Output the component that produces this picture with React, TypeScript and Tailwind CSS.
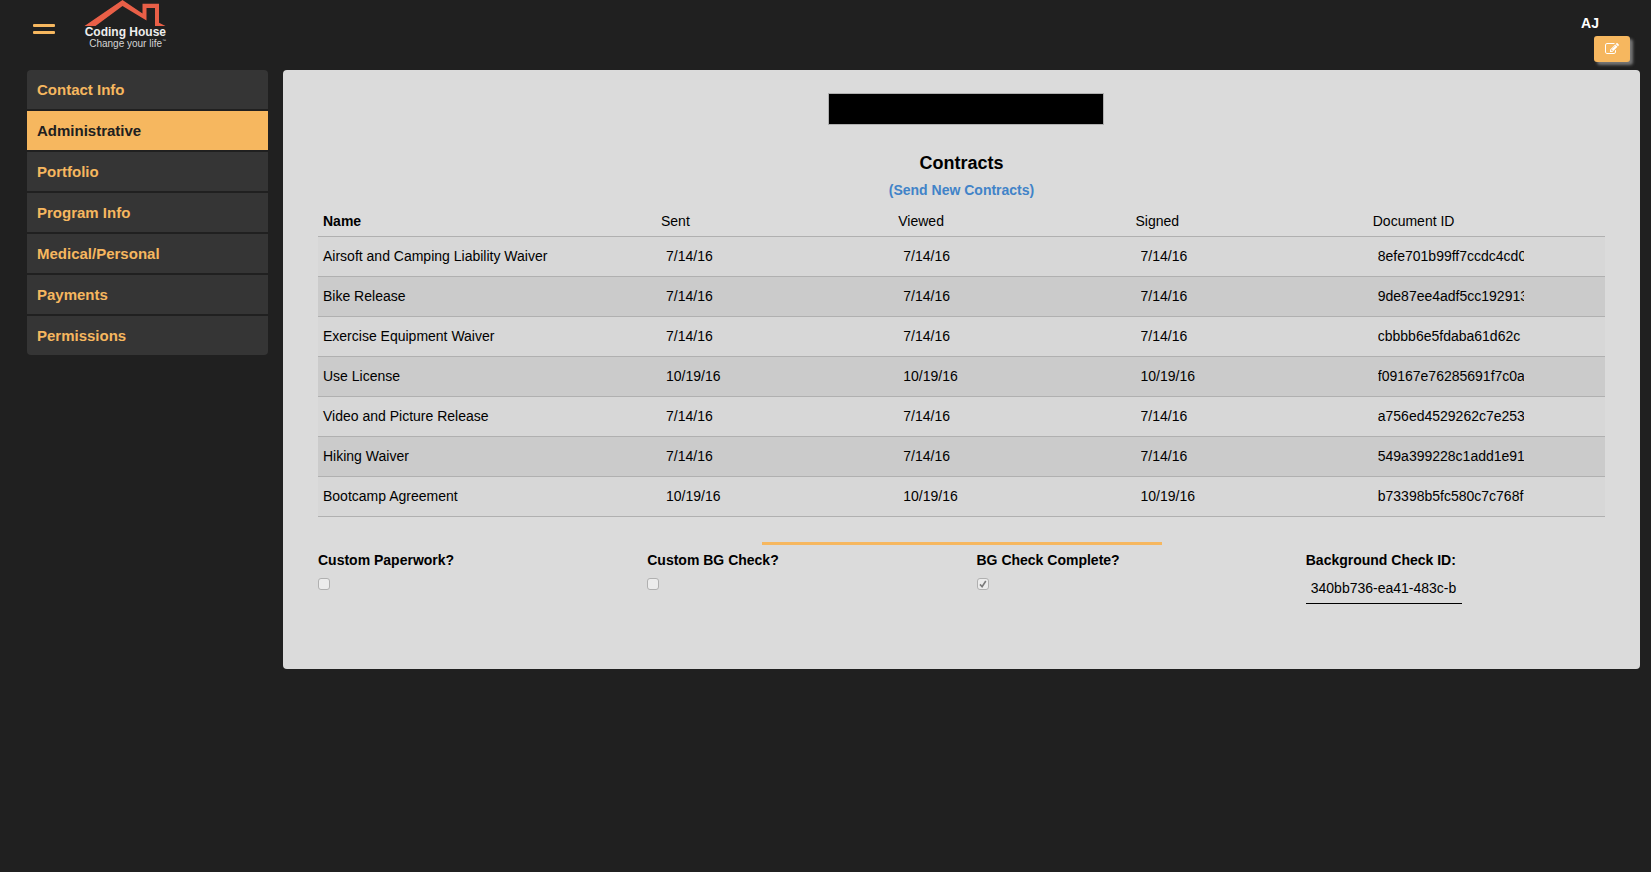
import { useState } from "react";

const sections = [
  "Contact Info",
  "Administrative",
  "Portfolio",
  "Program Info",
  "Medical/Personal",
  "Payments",
  "Permissions",
];

const contracts = [
  { name: "Airsoft and Camping Liability Waiver", date: "7/14/16", id: "8efe701b99ff7ccdc4cd0" },
  { name: "Bike Release", date: "7/14/16", id: "9de87ee4adf5cc192913" },
  { name: "Exercise Equipment Waiver", date: "7/14/16", id: "cbbbb6e5fdaba61d62c" },
  { name: "Use License", date: "10/19/16", id: "f09167e76285691f7c0a" },
  { name: "Video and Picture Release", date: "7/14/16", id: "a756ed4529262c7e253" },
  { name: "Hiking Waiver", date: "7/14/16", id: "549a399228c1add1e91" },
  { name: "Bootcamp Agreement", date: "10/19/16", id: "b73398b5fc580c7c768f" },
];

function Logo() {
  return (
    <a href="#home" className="flex w-[82px] flex-col items-end whitespace-nowrap">
      <svg viewBox="0 0 82 26" className="h-[26px] w-[82px]" aria-hidden="true">
        <path
          d="M0.5 26 L38.5 0 L58.5 13.5 V3.8 H75 V22.8 L81.5 26 H71 V8 H62.5 V20.5 L38.5 6 L11.5 26 Z"
          fill="#e95f47"
        />
      </svg>
      <span className="text-[12px] leading-[12px] font-bold text-[#ededed]">Coding House</span>
      <span className="flex text-[10px] leading-[11px] text-[#d5d5d5]">
        Change your life<span className="text-[4px] leading-[6px]">™</span>
      </span>
    </a>
  );
}

function EditIcon() {
  return (
    <svg viewBox="0 0 1792 1792" className="size-[14px]" fill="currentColor" aria-hidden="true">
      <path d="M888 1184l116-116-152-152-116 116v56h96v96h56zm440-720q-16-16-33 1l-350 350q-17 17-1 33t33-1l350-350q17-17 1-33zm80 594v190q0 119-84.5 203.5t-203.5 84.5h-832q-119 0-203.5-84.5t-84.5-203.5v-832q0-119 84.5-203.5t203.5-84.5h832q63 0 117 25 15 7 18 23 3 17-9 29l-49 49q-14 14-32 8-23-6-45-6h-832q-66 0-113 47t-47 113v832q0 66 47 113t113 47h832q66 0 113-47t47-113v-126q0-13 9-22l64-64q15-15 35-7t20 29zm-96-738l288 288-672 672h-288v-288zm444 132l-92 92-288-288 92-92q28-28 68-28t68 28l152 152q28 28 28 68t-28 68z" />
    </svg>
  );
}

function Field({ label, value }: { label: string; value: string }) {
  return (
    <input
      aria-label={label}
      defaultValue={value}
      readOnly
      className="block h-[38px] w-[156px] bg-transparent px-[5px] outline-none"
    />
  );
}

function CheckField({ id, label, checked }: { id: string; label: string; checked?: boolean }) {
  return (
    <div>
      <label htmlFor={id} className="block font-bold">
        {label}
      </label>
      <div className="mt-2 grid w-[12px]">
        <input
          id={id}
          type="checkbox"
          defaultChecked={checked}
          disabled
          className="peer col-start-1 row-start-1 size-[12px] appearance-none rounded-[3px] border border-[#b0b0b0] bg-[#ececec]"
        />
        <svg
          viewBox="0 0 12 12"
          className="pointer-events-none invisible col-start-1 row-start-1 size-[12px] peer-checked:visible"
          aria-hidden="true"
        >
          <path d="M3 6.4 L5.1 8.7 L8.8 3" fill="none" stroke="#7a7a7a" strokeWidth="1.6" />
        </svg>
      </div>
    </div>
  );
}

export default function App() {
  const [active, setActive] = useState("Administrative");

  return (
    <div className="min-h-screen bg-[#202020] font-['Liberation_Sans',Arial,sans-serif] text-[14px] leading-[20px] text-black">
      <header className="flex h-[70px] items-start pr-[21px] pl-[33px]">
        <button type="button" aria-label="Menu" className="mt-6 flex w-[22px] flex-col gap-1">
          <span className="h-[3px] rounded-[1px] bg-[#f6b75f]" />
          <span className="h-[3px] rounded-[1px] bg-[#f6b75f]" />
        </button>
        <div className="ml-[29px]">
          <Logo />
        </div>
        <div className="ml-auto flex flex-col items-end gap-[3px] pt-[13px]">
          <span className="pr-[31px] text-[14px] font-bold text-white">AJ</span>
          <button
            type="button"
            aria-label="Edit"
            className="flex h-[26px] w-[36px] items-center justify-center rounded-[3px] bg-[#f6b75f] text-white shadow-[3px_3px_3px_#777777]"
          >
            <EditIcon />
          </button>
        </div>
      </header>

      <div className="flex items-start gap-[15px] pr-[11px] pl-[27px]">
        <nav className="flex w-[241px] shrink-0 flex-col gap-[2px] overflow-hidden rounded-[4px]">
          {sections.map((section) => (
            <button
              key={section}
              type="button"
              onClick={() => setActive(section)}
              className={
                section === active
                  ? "h-[39px] bg-[#f6b75f] px-[10px] text-left text-[15px] font-bold text-[#202020]"
                  : "h-[39px] bg-[#353535] px-[10px] text-left text-[15px] font-bold text-[#f6b75f]"
              }
            >
              {section}
            </button>
          ))}
        </nav>

        <main className="min-w-0 grow rounded-[4px] bg-[#dbdbdb] px-[35px] pt-[23px] pb-[65px]">
          <div className="flex justify-center pl-[8px]">
            <div className="h-[32px] w-[276px] border border-[#b0b0b0] bg-black" />
          </div>

          <h2 className="mt-[28px] text-center text-[18px] leading-[20px] font-bold">Contracts</h2>
          <p className="mt-[7px] text-center">
            <a href="#send" className="font-bold text-[#4183c8]">
              (Send New Contracts)
            </a>
          </p>

          <table className="mt-[6px] w-full table-fixed border-collapse">
            <thead>
              <tr className="h-[30px] border-b border-[#b0b0b0] text-left">
                <th className="w-[338px] px-[5px] font-bold">Name</th>
                <th className="px-[5px] font-normal">Sent</th>
                <th className="px-[5px] font-normal">Viewed</th>
                <th className="px-[5px] font-normal">Signed</th>
                <th className="px-[5px] font-normal">Document ID</th>
              </tr>
            </thead>
            <tbody>
              {contracts.map((c) => (
                <tr
                  key={c.name}
                  className="h-[40px] border-b border-[#b0b0b0] odd:bg-[#d7d7d7] even:bg-[#cbcbcb]"
                >
                  <td className="px-[5px]">{c.name}</td>
                  <td className="px-[5px]">
                    <Field label={`${c.name} sent`} value={c.date} />
                  </td>
                  <td className="px-[5px]">
                    <Field label={`${c.name} viewed`} value={c.date} />
                  </td>
                  <td className="px-[5px]">
                    <Field label={`${c.name} signed`} value={c.date} />
                  </td>
                  <td className="px-[5px]">
                    <Field label={`${c.name} document ID`} value={c.id} />
                  </td>
                </tr>
              ))}
            </tbody>
          </table>

          <hr className="mx-auto mt-[25px] h-[3px] w-[400px] border-0 bg-[#f6b75f]" />

          <div className="mt-[5px] grid grid-cols-4 gap-[30px]">
            <CheckField id="custom-paperwork" label="Custom Paperwork?" />
            <CheckField id="custom-bg" label="Custom BG Check?" />
            <CheckField id="bg-complete" label="BG Check Complete?" checked />
            <div>
              <label htmlFor="bg-id" className="block font-bold">
                Background Check ID:
              </label>
              <input
                id="bg-id"
                defaultValue="340bb736-ea41-483c-b"
                readOnly
                className="mt-1 block h-[30px] w-[156px] border-b border-black bg-transparent px-[5px] outline-none"
              />
            </div>
          </div>
        </main>
      </div>
    </div>
  );
}
